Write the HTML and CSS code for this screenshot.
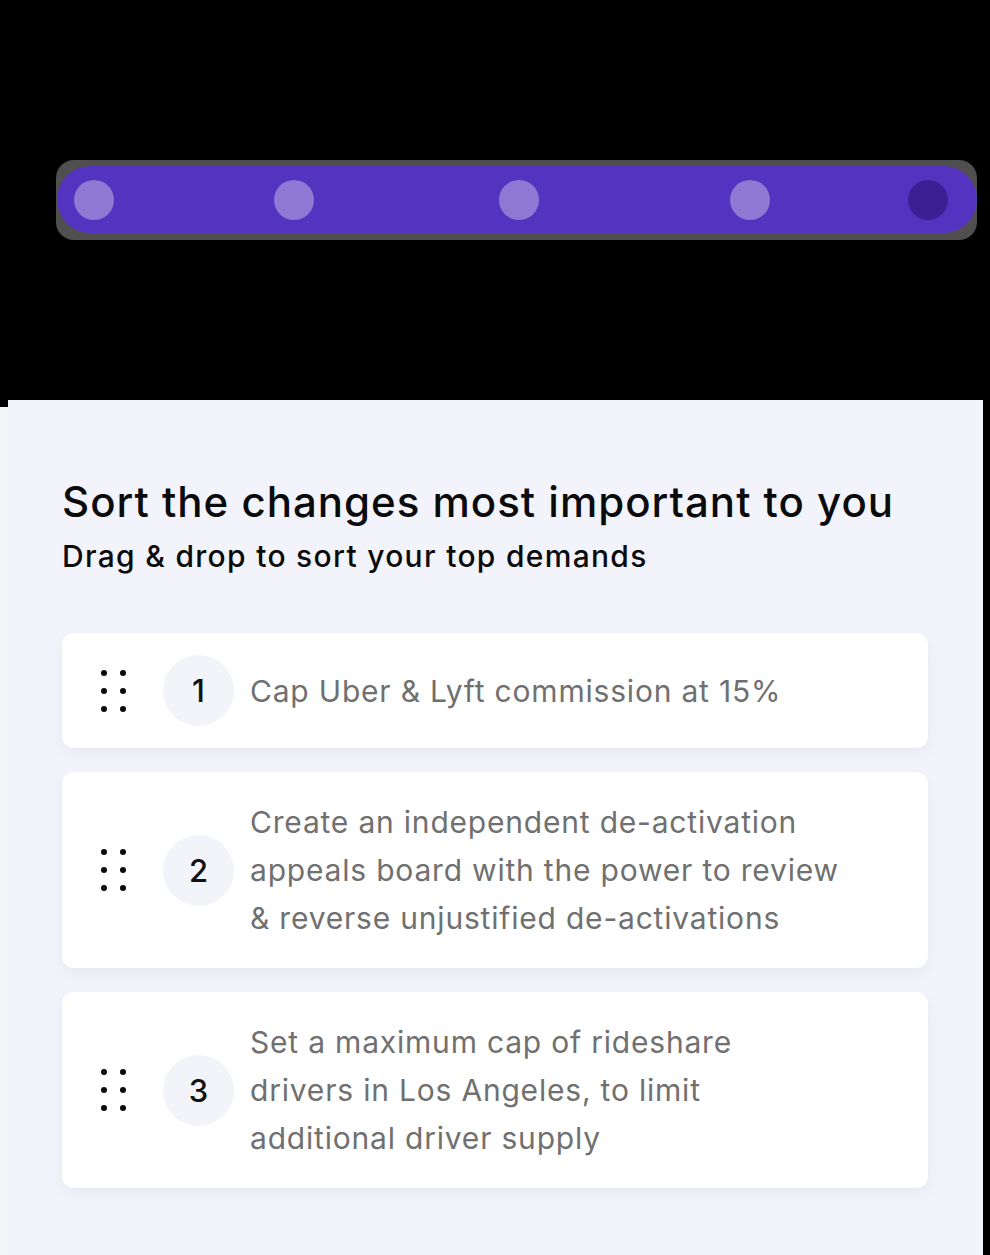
FILE: index.html
```html
<!DOCTYPE html>
<html lang="en">
<head>
<meta charset="utf-8">
<title>Sort demands</title>
<link rel="stylesheet" href="styles.css">
</head>
<body>
<div class="top">
  <div class="track-outer">
    <div class="track">
      <span class="step done s1"></span>
      <span class="step done s2"></span>
      <span class="step done s3"></span>
      <span class="step done s4"></span>
      <span class="step current s5"></span>
    </div>
  </div>
</div>
<section class="panel">
  <h1 class="title">Sort the changes most important to you</h1>
  <p class="subtitle">Drag &amp; drop to sort your top demands</p>
  <ol class="list">
    <li class="card">
      <span class="handle"><i></i><i></i><i></i><i></i><i></i><i></i></span>
      <span class="num">1</span>
      <p class="text">Cap Uber &amp; Lyft commission at 15%</p>
    </li>
    <li class="card">
      <span class="handle"><i></i><i></i><i></i><i></i><i></i><i></i></span>
      <span class="num">2</span>
      <p class="text">Create an independent de-activation appeals board with the power to review &amp; reverse unjustified de-activations</p>
    </li>
    <li class="card">
      <span class="handle"><i></i><i></i><i></i><i></i><i></i><i></i></span>
      <span class="num">3</span>
      <p class="text">Set a maximum cap of rideshare drivers in Los Angeles, to limit additional driver supply</p>
    </li>
  </ol>
</section>
</body>
</html>
```
FILE: styles.css
```css
html, body {
  margin: 0;
  padding: 0;
  background: #000;
}
body {
  font-family: "Inter", "Noto Sans", sans-serif;
  width: 990px;
  height: 1255px;
  overflow: hidden;
}
.top {
  height: 400px;
  padding: 160px 0 0 56px;
  box-sizing: border-box;
}
.track-outer {
  width: 921px;
  background: #4f4f4f;
  border-radius: 18px;
  padding: 6px 0 7px;
}
.track {
  height: 67px;
  background: #5433c1;
  border-radius: 34px;
  display: flex;
  align-items: center;
  padding-left: 17px;
  margin-left: 1px;
}
.step {
  width: 40px;
  height: 40px;
  border-radius: 50%;
  flex: none;
}
.step.done { background: #8e78d3; }
.step.current { background: #3b1f93; }
.s2 { margin-left: 160px; }
.s3 { margin-left: 185px; }
.s4 { margin-left: 191px; }
.s5 { margin-left: 138px; }

.panel {
  margin-left: 8px;
  width: 975px;
  height: 855px;
  background: #f3f4fb;
  box-shadow: -8px 7px 0 0 #f3f5f6;
  padding: 74px 55px 0 54px;
  box-sizing: border-box;
}
.title {
  margin: 0;
  font-size: 42px;
  font-weight: 500;
  color: #0b0b0b;
  line-height: 56px;
  letter-spacing: 1px;
}
.subtitle {
  margin: 6px 0 0;
  font-size: 30px;
  font-weight: 500;
  color: #0b0b0b;
  line-height: 40px;
  letter-spacing: 1.3px;
}
.list {
  list-style: none;
  margin: 57px 0 0;
  padding: 0;
  display: flex;
  flex-direction: column;
  gap: 24px;
}
.card {
  background: #fff;
  border-radius: 12px;
  box-shadow: 0 6px 14px rgba(30, 30, 60, 0.06);
  display: flex;
  align-items: center;
  padding: 22px 20px 22px 39px;
}
.handle {
  display: grid;
  grid-template-columns: 6px 6px;
  column-gap: 13px;
  row-gap: 12px;
  flex: none;
}
.handle i {
  width: 6px;
  height: 6px;
  border-radius: 50%;
  background: #0a0a0a;
}
.num {
  flex: none;
  width: 71px;
  height: 71px;
  border-radius: 50%;
  background: #f3f3fa;
  margin-left: 37px;
  display: flex;
  align-items: center;
  justify-content: center;
  font-size: 31px;
  font-weight: 500;
  color: #111;
}
.text {
  margin: 4px 0 4px 16px;
  font-size: 30px;
  line-height: 48px;
  color: #707070;
  letter-spacing: 0.8px;
  max-width: 591px;
}
```
